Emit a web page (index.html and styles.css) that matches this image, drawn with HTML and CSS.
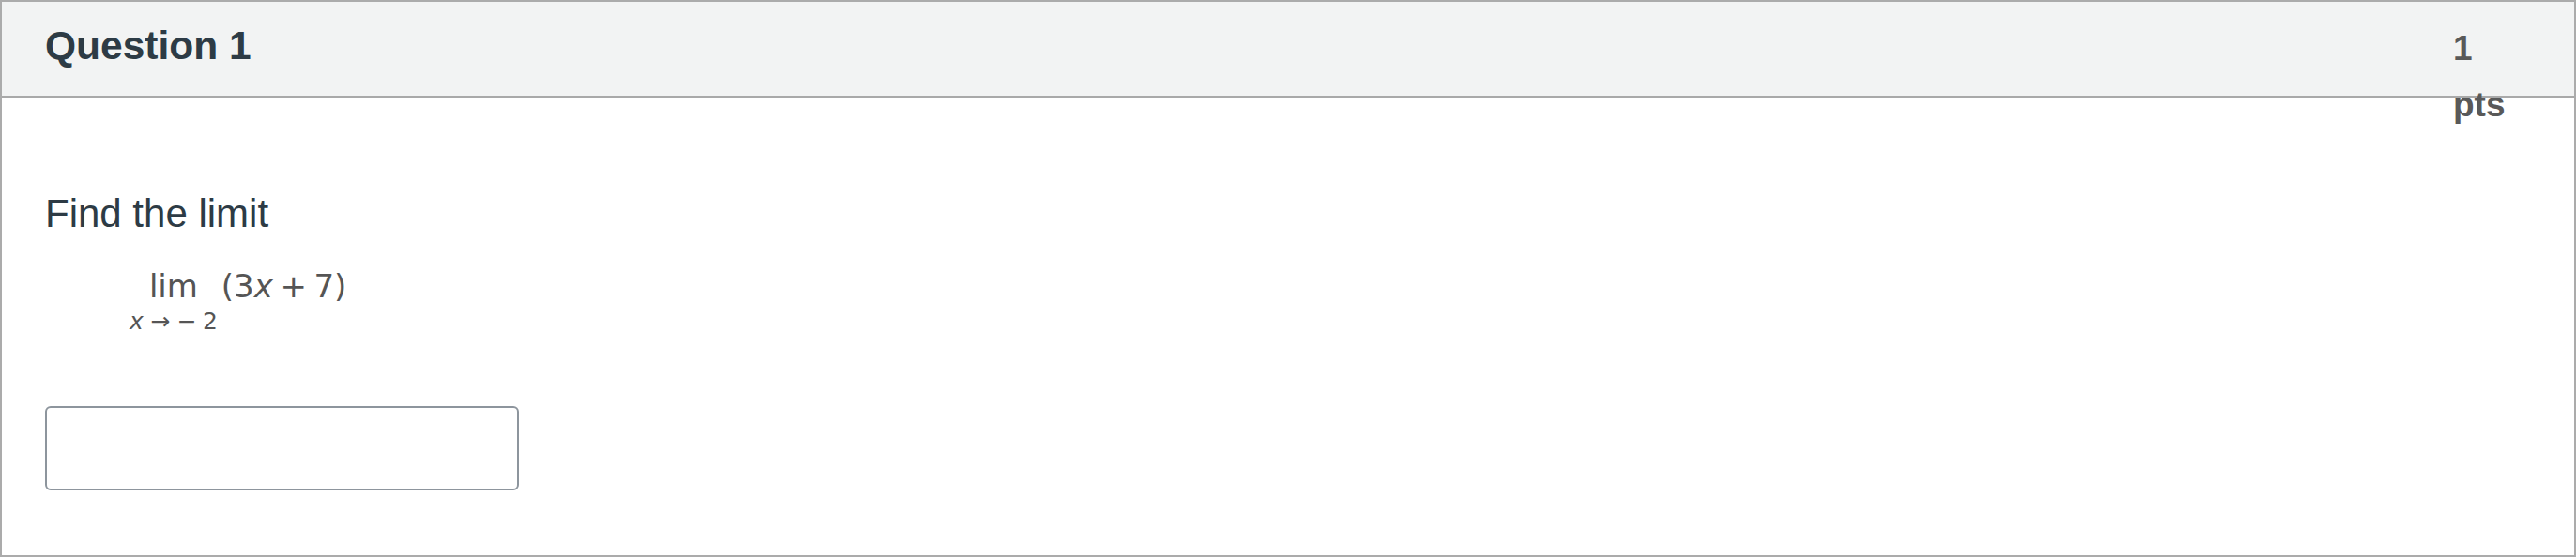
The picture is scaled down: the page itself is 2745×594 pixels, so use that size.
FILE: index.html
```html
<!DOCTYPE html>
<html lang="en">
<head>
<meta charset="utf-8">
<title>Question 1</title>
<link rel="stylesheet" href="styles.css">
</head>
<body>
<div class="question">
  <div class="q-header">
    <div class="q-title">Question 1</div>
    <div class="q-points">1 pts</div>
  </div>
  <div class="q-body">
    <p class="q-text">Find the limit</p>
    <div class="math">
      <span class="munder">
        <span class="lim">lim</span>
        <span class="under"><i class="mi">x</i><span class="rel">→</span><span class="neg">−</span>2</span>
      </span>
      <span class="expr">(3<i class="mi">x</i><span class="op">+</span>7)</span>
    </div>
    <input class="answer" type="text" aria-label="answer">
  </div>
</div>
</body>
</html>
```
FILE: styles.css
```css
html, body {
  margin: 0;
  padding: 0;
  background: #ffffff;
}

.question {
  border: 2px solid #ababab;
  box-sizing: border-box;
  width: 2745px;
  height: 594px;
  font-family: "Liberation Sans", Arial, sans-serif;
}

.q-header {
  display: flex;
  justify-content: space-between;
  align-items: flex-start;
  height: 102px;
  padding: 20px 59px 0 46px;
  box-sizing: border-box;
  background: #f2f3f3;
  border-bottom: 2px solid #a9a9a9;
}

.q-title {
  margin-top: 3px;
  font-size: 42.5px;
  font-weight: bold;
  line-height: 48px;
  color: #2d3b45;
}

.q-points {
  width: 70px;
  font-size: 37px;
  font-weight: bold;
  line-height: 60px;
  color: #595959;
}

.q-body {
  padding: 92px 44px 0 46px;
}

.q-text {
  margin: 0;
  font-size: 42px;
  line-height: 63px;
  color: #2d3b45;
}

.math {
  display: flex;
  align-items: flex-start;
  margin: 26px 0 0 90px;
  font-family: "DejaVu Sans", sans-serif;
  color: #555555;
}

.munder {
  display: flex;
  flex-direction: column;
  align-items: center;
}

.lim {
  font-size: 34px;
  line-height: 40px;
}

.under {
  margin-top: 4px;
  font-size: 25px;
  line-height: 28px;
  white-space: nowrap;
}

.rel {
  margin: 0 0.3em;
}

.neg {
  margin-right: 0.25em;
}

.expr {
  margin-left: 4px;
  font-size: 34px;
  line-height: 40px;
  white-space: nowrap;
}

.mi {
  font-style: italic;
}

.op {
  margin: 0 0.222em;
}

.answer {
  display: block;
  margin: 76px 0 0 0;
  width: 505px;
  height: 90px;
  box-sizing: border-box;
  border: 2px solid #8d959d;
  border-radius: 6px;
  background: #ffffff;
  padding: 0 12px;
  font-size: 28px;
  outline: none;
}
```
